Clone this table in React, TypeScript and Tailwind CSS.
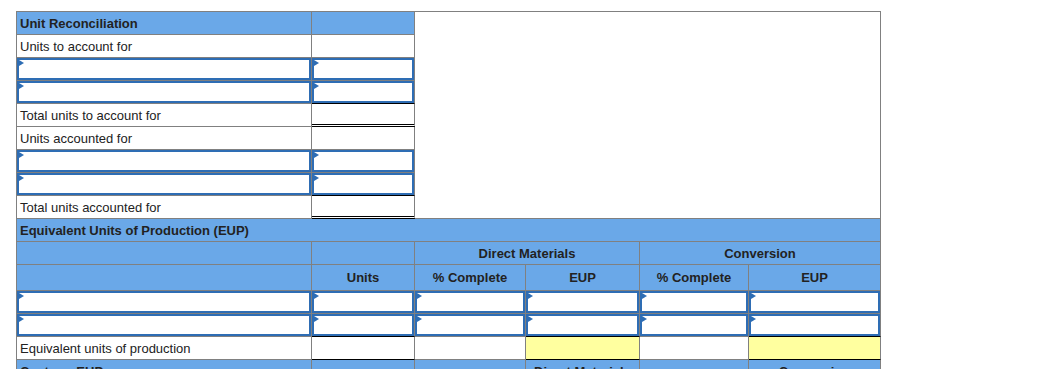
import React from 'react';

const GRID = 'border-r border-b border-[#808080] p-0';

type CellProps = { children?: React.ReactNode; className?: string; inner?: string; colSpan?: number; rowSpan?: number };

// plain text cell
const Cell = ({ children, className = '', inner = 'h-[22px] justify-start', colSpan, rowSpan }: CellProps) => (
  <td colSpan={colSpan} rowSpan={rowSpan} className={`${GRID} ${className}`}>
    <div className={`flex items-center px-[3px] whitespace-nowrap ${inner}`}>{children}</div>
  </td>
);

// blue header cell
const Head = ({ children, className = '', inner = 'h-[22px] justify-center', colSpan }: CellProps) => (
  <Cell colSpan={colSpan} className={`bg-[#6aa8e8] font-bold ${className}`} inner={inner}>
    {children}
  </Cell>
);

// entry box with the small blue marker
const Input = ({ className = '' }: { className?: string }) => (
  <td className={`${GRID} ${className}`}>
    <div className="relative h-[22px] border-2 border-[#2e6db4] bg-white">
      <span className="absolute left-0 top-0 border-l-[5px] border-y-[3px] border-y-transparent border-l-[#2e6db4]" />
    </div>
  </td>
);

const Total = () => (
  <td className="border-r border-[#808080] border-b-[3px] border-b-black border-double p-0">
    <div className="h-[20px]" />
  </td>
);

export default function App() {
  return (
    <div className="min-h-screen bg-white pl-4 pt-[11px] font-['Liberation_Sans',Arial,sans-serif] text-[13px] leading-none text-[#222]">
      <table className="w-[865px] table-fixed border-separate border-spacing-0 border-l border-t border-[#808080]">
        <colgroup>
          <col className="w-[295px]" />
          <col className="w-[103px]" />
          <col className="w-[111px]" />
          <col className="w-[114px]" />
          <col className="w-[109px]" />
          <col className="w-[132px]" />
        </colgroup>
        <tbody>
          {/* Unit reconciliation */}
          <tr>
            <Head inner="h-[22px] justify-start">Unit Reconciliation</Head>
            <Head />
            <td colSpan={4} rowSpan={9} className={`${GRID} bg-white`} />
          </tr>
          <tr>
            <Cell>Units to account for</Cell>
            <Cell />
          </tr>
          <tr>
            <Input />
            <Input />
          </tr>
          <tr>
            <Input />
            <Input className="border-b-black" />
          </tr>
          <tr>
            <Cell>Total units to account for</Cell>
            <Total />
          </tr>
          <tr>
            <Cell>Units accounted for</Cell>
            <Cell />
          </tr>
          <tr>
            <Input />
            <Input />
          </tr>
          <tr>
            <Input />
            <Input className="border-b-black" />
          </tr>
          <tr>
            <Cell>Total units accounted for</Cell>
            <Total />
          </tr>

          {/* EUP */}
          <tr>
            <Head colSpan={6} inner="h-[22px] justify-start">Equivalent Units of Production (EUP)</Head>
          </tr>
          <tr>
            <Head />
            <Head />
            <Head colSpan={2}>Direct Materials</Head>
            <Head colSpan={2}>Conversion</Head>
          </tr>
          <tr>
            <Head inner="h-[25px]" />
            <Head inner="h-[25px] justify-center">Units</Head>
            <Head inner="h-[25px] justify-center">% Complete</Head>
            <Head inner="h-[25px] justify-center">EUP</Head>
            <Head inner="h-[25px] justify-center">% Complete</Head>
            <Head inner="h-[25px] justify-center">EUP</Head>
          </tr>
          <tr>
            <Input />
            <Input />
            <Input />
            <Input />
            <Input />
            <Input />
          </tr>
          <tr>
            <Input />
            <Input className="border-b-black" />
            <Input />
            <Input className="border-b-black" />
            <Input />
            <Input className="border-b-black" />
          </tr>
          <tr>
            <Cell>Equivalent units of production</Cell>
            <Cell className="border-b-black" />
            <Cell />
            <Cell className="border-b-black bg-[#ffff9f]" />
            <Cell />
            <Cell className="border-b-black bg-[#ffff9f]" />
          </tr>
          <tr>
            <Head inner="h-[22px] justify-start">Cost per EUP</Head>
            <Head />
            <Head />
            <Head>Direct Materials</Head>
            <Head />
            <Head>Conversion</Head>
          </tr>
        </tbody>
      </table>
    </div>
  );
}
